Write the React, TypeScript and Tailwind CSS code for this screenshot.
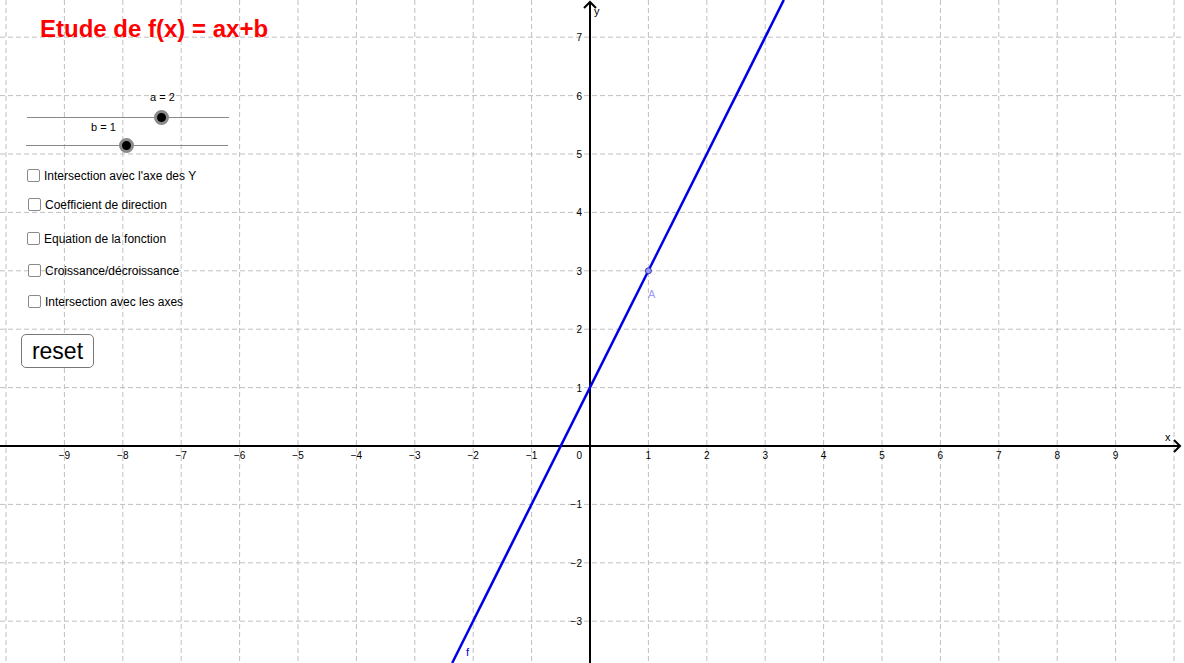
import React from 'react';

const U = 58.4;
const OX = 590;
const OY = 446;
const W = 1184;
const H = 663;

const px = (x: number) => OX + x * U;
const py = (y: number) => OY - y * U;

const xs = Array.from({ length: 21 }, (_, i) => i - 10);
const ys = Array.from({ length: 12 }, (_, i) => i - 3);

const label = (n: number) => (n < 0 ? `\u2212${-n}` : `${n}`);

const Graph: React.FC = () => {
  const x0 = (7.637 - 1) / 2;
  const x1 = (-3.72 - 1) / 2;
  return (
    <svg width={W} height={H} className="absolute inset-0" style={{ fontFamily: '"Liberation Sans", Arial, sans-serif' }}>
      {xs.map((k) =>
        k === 0 ? null : (
          <line key={`vx${k}`} x1={px(k)} y1={0} x2={px(k)} y2={H} stroke="#c0c0c0" strokeWidth={1} strokeDasharray="5 3" />
        )
      )}
      {ys.map((k) =>
        k === 0 ? null : (
          <line key={`hy${k}`} x1={0} y1={py(k)} x2={W} y2={py(k)} stroke="#c0c0c0" strokeWidth={1} strokeDasharray="5 3" />
        )
      )}
      {/* axes */}
      <line x1={0} y1={OY} x2={1179} y2={OY} stroke="#000" strokeWidth={2} />
      <line x1={OX} y1={H} x2={OX} y2={3} stroke="#000" strokeWidth={2} />
      <polyline points={`1174,440 1180,446 1174,452`} fill="none" stroke="#000" strokeWidth={2} />
      <polyline points={`584,8 590,2 596,8`} fill="none" stroke="#000" strokeWidth={2} />
      <text x={1165} y={441} fontSize={11} fill="#000">x</text>
      <text x={594} y={15} fontSize={11} fill="#000">y</text>
      {xs.map((k) =>
        k === 0 || k === 10 || k === -10 ? null : (
          <text key={`lx${k}`} x={px(k)} y={459} fontSize={10} fill="#000" textAnchor="middle">
            {label(k)}
          </text>
        )
      )}
      <text x={582} y={459} fontSize={10} fill="#000" textAnchor="end">0</text>
      {ys.map((k) =>
        k === 0 ? null : (
          <text key={`ly${k}`} x={582} y={py(k) + 4} fontSize={10} fill="#000" textAnchor="end">
            {label(k)}
          </text>
        )
      )}
      {/* f */}
      <line x1={px(x0)} y1={0} x2={px(x1)} y2={H} stroke="#0000e6" strokeWidth={2.5} />
      <text x={466} y={656} fontSize={11} fill="#0000e6">f</text>
      {/* A */}
      <circle cx={px(1)} cy={py(3)} r={3} fill="#9999ff" stroke="#3333aa" strokeWidth={1} />
      <text x={648} y={298} fontSize={11} fill="#9b9bf0">A</text>
    </svg>
  );
};

const Slider: React.FC<{ text: string; knob: number; labelLeft: number; lineTop: number }> = ({ text, knob, labelLeft, lineTop }) => (
  <div className="relative w-[202px]" style={{ height: lineTop + 8 }}>
    <div className="absolute text-[11px] leading-none text-black" style={{ left: labelLeft, top: 0 }}>
      {text}
    </div>
    <div className="absolute left-0 right-0 h-px bg-[#888]" style={{ top: lineTop }} />
    <div
      className="absolute h-[15px] w-[15px] rounded-full bg-black border-[3px] border-[#8a8a8a]"
      style={{ left: knob - 7.5, top: lineTop - 7 }}
    />
  </div>
);

const Check: React.FC<{ text: string; ml?: string; mt: string }> = ({ text, ml = 'ml-0', mt }) => (
  <div className={`flex items-center gap-[4px] ${ml} ${mt}`}>
    <div className="h-[13px] w-[13px] rounded-[2px] border border-[#8a8a8a] bg-white" />
    <span className="text-[12px] leading-none text-black">{text}</span>
  </div>
);

export default function App() {
  return (
    <div className="relative w-[1184px] h-[663px] overflow-hidden bg-white" style={{ fontFamily: '"Liberation Sans", Arial, sans-serif' }}>
      <Graph />
      <h1 className="absolute left-[40px] top-[17px] text-[24px] font-bold leading-none text-[#ff0000]">
        Etude de f(x) = ax+b
      </h1>
      <div className="absolute left-[26px] top-[92px] flex flex-col">
        <div className="ml-[1px]">
          <Slider text="a = 2" knob={134} labelLeft={123} lineTop={25} />
        </div>
        <div className="-mt-[3px]">
          <Slider text="b = 1" knob={100} labelLeft={65} lineTop={23} />
        </div>
      </div>
      <div className="absolute left-[27px] top-[168px] flex flex-col">
        <Check text="Intersection avec l'axe des Y" mt="mt-[1px]" />
        <Check text="Coefficient de direction" ml="ml-[1px]" mt="mt-[16px]" />
        <Check text="Equation de la fonction" mt="mt-[21px]" />
        <Check text="Croissance/décroissance" ml="ml-[1px]" mt="mt-[19px]" />
        <Check text="Intersection avec les axes" ml="ml-[1px]" mt="mt-[18px]" />
      </div>
      <button className="absolute left-[21px] top-[334px] h-[34px] w-[73px] rounded-[5px] border border-[#777] bg-white text-[23px] leading-none text-black">
        reset
      </button>
    </div>
  );
}
